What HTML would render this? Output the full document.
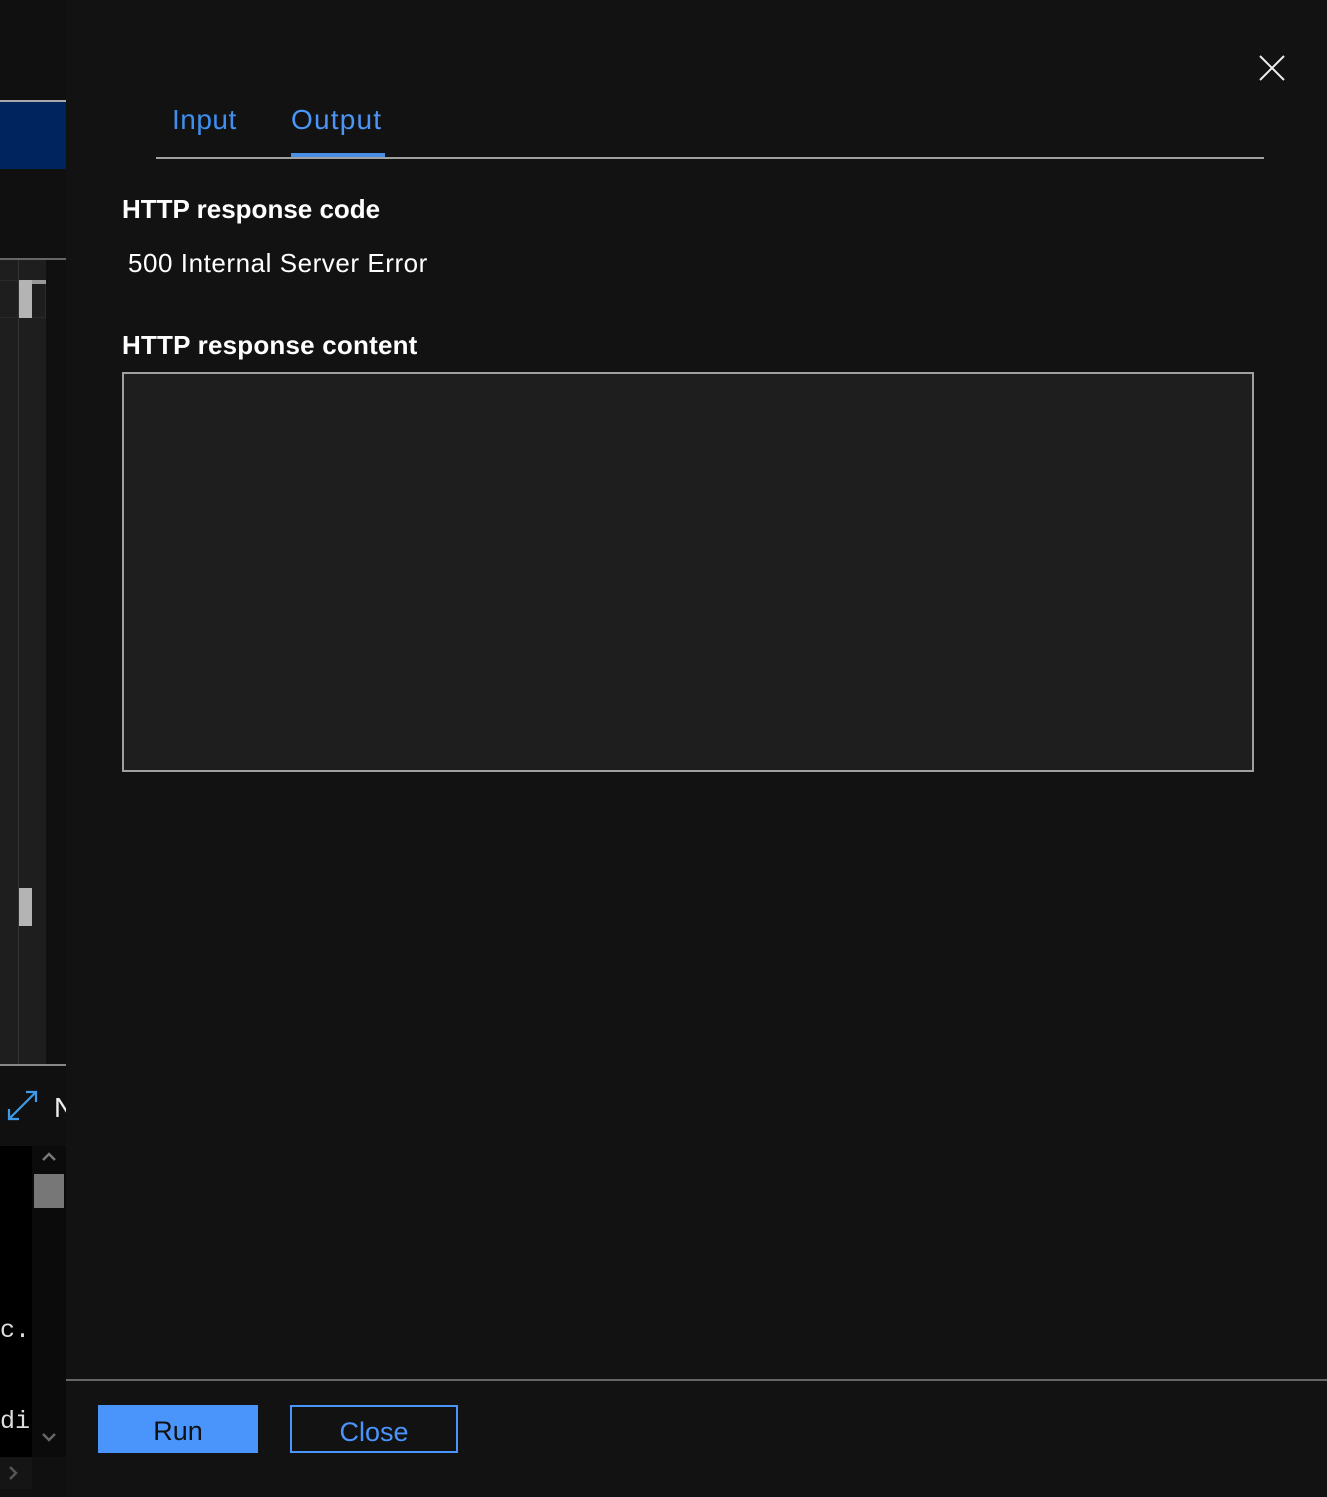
<!DOCTYPE html>
<html><head><meta charset="utf-8"><style>
*{margin:0;padding:0;box-sizing:border-box}
body{width:1327px;height:1497px;background:#121212;position:relative;overflow:hidden;font-family:"Liberation Sans",sans-serif}
.a{position:absolute}
</style></head><body>
<!-- left strip -->
<div class="a" style="left:0;top:0;width:66px;height:1497px;background:#101010"></div>
<div class="a" style="left:0;top:100px;width:66px;height:2px;background:#a9a9a9"></div>
<div class="a" style="left:0;top:102px;width:66px;height:67px;background:#00245e"></div>
<div class="a" style="left:0;top:258px;width:66px;height:2px;background:#666"></div>
<div class="a" style="left:0;top:260px;width:46px;height:804px;background:#1e1e1e"></div>
<div class="a" style="left:18px;top:260px;width:1px;height:804px;background:#333"></div>
<div class="a" style="left:0;top:280px;width:46px;height:38px;border:1px solid #2a2a2a;border-left:none"></div>
<div class="a" style="left:19px;top:280px;width:27px;height:4px;background:#999"></div>
<div class="a" style="left:19px;top:280px;width:13px;height:38px;background:#b4b4b4"></div>
<div class="a" style="left:19px;top:888px;width:13px;height:38px;background:#b4b4b4"></div>
<div class="a" style="left:0;top:1064px;width:66px;height:2px;background:#888"></div>
<svg class="a" style="left:6px;top:1090px" width="32" height="32" viewBox="0 0 32 32"><path d="M3 29L30 2M20 2h10v10M3 19v10h10" stroke="#3d9be9" stroke-width="2.2" fill="none"/></svg>
<div class="a" style="left:54px;top:1092px;color:#eee;font-size:28px">N</div>
<div class="a" style="left:0;top:1146px;width:32px;height:311px;background:#000"></div>
<div class="a" style="left:32px;top:1146px;width:34px;height:311px;background:#0b0b0b"></div>
<div class="a" style="left:34px;top:1174px;width:30px;height:34px;background:#777"></div>
<svg class="a" style="left:40px;top:1150px" width="18" height="14"><path d="M3 10l6-6 6 6" stroke="#777" stroke-width="2.5" fill="none"/></svg>
<svg class="a" style="left:40px;top:1430px" width="18" height="14"><path d="M3 4l6 6 6-6" stroke="#666" stroke-width="2.5" fill="none"/></svg>
<div class="a" style="left:0;top:1316px;color:#ddd;font:25px 'Liberation Mono',monospace">c.</div>
<div class="a" style="left:0;top:1407px;color:#ddd;font:25px 'Liberation Mono',monospace">di</div>
<div class="a" style="left:0;top:1457px;width:32px;height:32px;background:#151515"></div>
<svg class="a" style="left:6px;top:1464px" width="14" height="18"><path d="M4 3l6 6-6 6" stroke="#555" stroke-width="2.5" fill="none"/></svg>
<!-- panel -->
<div class="a" style="left:66px;top:0;width:1261px;height:1497px;background:#121212"></div>
<svg class="a" style="left:1258px;top:54px" width="28" height="28"><path d="M2 2l24 24M26 2L2 26" stroke="#eee" stroke-width="2"/></svg>
<div class="a" style="left:172px;top:104px;color:#3f8ff0;font-size:28px;letter-spacing:0.5px">Input</div>
<div class="a" style="left:291px;top:104px;color:#4a95f5;font-size:28px;letter-spacing:1.2px">Output</div>
<div class="a" style="left:156px;top:157px;width:1108px;height:2px;background:#a0a0a0"></div>
<div class="a" style="left:291px;top:153px;width:94px;height:4px;background:#4a8fe6"></div>
<div class="a" style="left:122px;top:194px;color:#fff;font-size:26px;font-weight:bold">HTTP response code</div>
<div class="a" style="left:128px;top:248px;color:#fff;font-size:26px;letter-spacing:0.55px">500 Internal Server Error</div>
<div class="a" style="left:122px;top:330px;color:#fff;font-size:26px;font-weight:bold;letter-spacing:0.2px">HTTP response content</div>
<div class="a" style="left:122px;top:372px;width:1132px;height:400px;background:#1e1e1e;border:2px solid #a0a0a0"></div>
<div class="a" style="left:66px;top:1379px;width:1261px;height:2px;background:#666"></div>
<div class="a" style="left:98px;top:1405px;width:160px;height:48px;background:#4a95fc;color:#111;font-size:27px;text-align:center;line-height:52px">Run</div>
<div class="a" style="left:290px;top:1405px;width:168px;height:48px;border:2px solid #4a95fc;color:#4a95fc;font-size:27px;text-align:center;line-height:50px">Close</div>
</body></html>
